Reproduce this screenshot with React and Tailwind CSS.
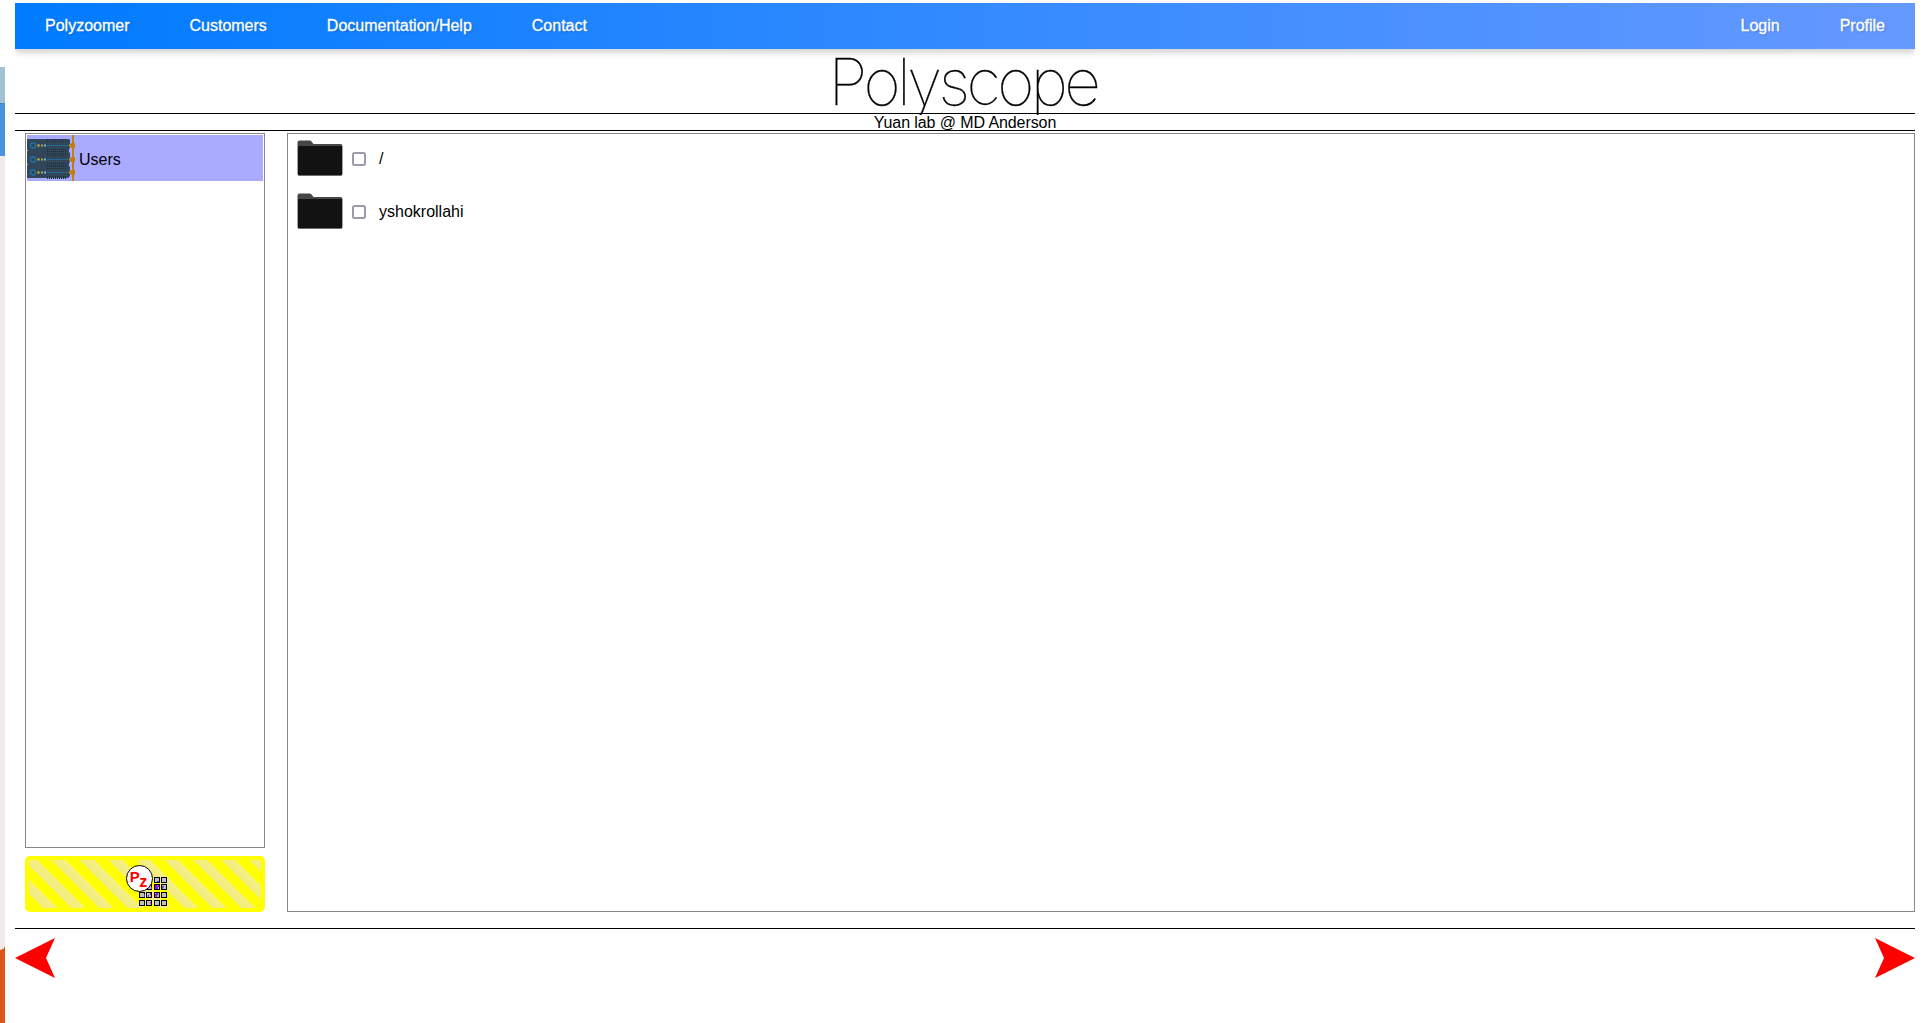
const vents = [-6, -4, 4, 6];

function ServerRack() {
  return (
    <svg className="h-[46px] w-[48px] shrink-0" viewBox="0 0 48 46">
      <path d="M0 4h42l1 1v8l-1 1v3l1 1v9l-1 1v3l1 1v9l-2 2H0v-13h1v-1H0v-13h1v-1H0z" fill="#32465a" />
      {[10, 24, 37].map((y) => (
        <g key={y}>
          {vents.map((v) => (
            <path key={v} d={`M20 ${y + v + 0.5}h19`} stroke="#202e3b" strokeWidth="1" strokeDasharray="1 1" />
          ))}
          <circle cx="6" cy={y + 0.5} r="2.6" fill="none" stroke="#2077ad" strokeWidth="1.2" />
          <rect x="10.5" y={y - 0.5} width="2" height="2" fill="#f1c40f" />
          <rect x="14" y={y - 0.5} width="2" height="2" fill="#8fae58" />
          <rect x="17" y={y - 0.5} width="2" height="2" fill="#7db5e6" />
          <path d={`M20 ${y + 0.5}h23`} stroke="#206a99" />
          <path d={`M42 ${y - 1}h2v-1h4v5h-4v-1h-2z`} fill="#c27f0e" />
        </g>
      ))}
      <path d="M46 0v46" stroke="#c27f0e" strokeWidth="2" />
    </svg>
  );
}

function Folder() {
  return (
    <svg className="h-[36px] w-[46px] shrink-0" viewBox="0 0 46 36">
      <path
        d="M.5 34V2.5Q.5 .5 2.5 .5H13Q14 .5 14.5 1.5L16.5 4H43.5Q45.5 4 45.5 6V34Q45.5 35.5 44 35.5H2Q.5 35.5 .5 34z"
        fill="#454746"
      />
      <path d="M1 7Q1 6 2 6H44Q45 6 45 7V34Q45 35 44 35H2Q1 35 1 34z" fill="#121212" />
      <path d="M1.5 35.5H44.5" stroke="#6d6d6d" />
    </svg>
  );
}

function FolderRow({ name }) {
  return (
    <li className="flex h-[53px] items-start pt-[6px] pl-[9px]">
      <Folder />
      <span className="mt-[12px] ml-[9px] size-[14px] shrink-0 rounded-[2.5px] border-2 border-[#9c9aac] bg-white" />
      <span className="mt-[9px] ml-[13px] leading-5">{name}</span>
    </li>
  );
}

const tileX = [13.5, 20.5, 28.5, 35.5];
const tileY = [12.5, 19.5, 27.5, 35.5];
const tiles = [
  [2, 0], [3, 0],
  [1, 1], [2, 1], [3, 1],
  [0, 2], [1, 2], [2, 2], [3, 2],
  [0, 3], [1, 3], [2, 3], [3, 3],
];

function PolyzoomerIcon() {
  return (
    <svg className="ml-[4px] h-[42px] w-[42px]" viewBox="0 0 42 42">
      <g>
        {tiles.map(([c, r]) => (
          <rect key={`${c}-${r}`} x={tileX[c]} y={tileY[r]} width="5" height="5" fill="#c0c0c0" stroke="#000" />
        ))}
        <path d="M29 20h4v2h-1v2h-3zM25 22h1v2h-1zM30 28h2v2h-1v2h-2v-3h1zM24 28h1v2h-1zM22 30h1v2h-1z" fill="#8a14f0" />
        <path d="M36 21h2v1h-1v2h-1zM18 29h1v3h-1zM31 16h2v1h-2zM30 22h1v1h-1z" fill="#4434f0" />
        <path d="M24 37h1v2h-1zM31 20h1v1h-1zM29 31h1v1h-1z" fill="#ff20e8" />
        <path d="M32 29h1v2h-1zM37 22h1v1h-1z" fill="#7cb87c" />
      </g>
      <circle cx="13.5" cy="13.5" r="13" fill="#fff" stroke="#000" />
      <text x="3.8" y="17" fill="#f00" fontFamily="'Liberation Sans', sans-serif" fontWeight="700" fontSize="15">
        P
      </text>
      <text x="13.2" y="21.5" fill="#f00" fontFamily="'Liberation Sans', sans-serif" fontWeight="700" fontSize="16">
        z
      </text>
    </svg>
  );
}

function NavLink({ children }) {
  return (
    <a className="flex items-center px-[30px] text-white [-webkit-text-stroke:0.3px_white] [text-shadow:1px_1px_2px_rgba(0,0,0,0.2)]">
      {children}
    </a>
  );
}

function Arrow({ className }) {
  return (
    <svg className={className} viewBox="0 0 40 40">
      <path d="M0 20L40 0L31 20L40 40z" fill="#f00" />
    </svg>
  );
}

export default function App() {
  return (
    <div className="flex h-[1023px] w-[1925px] overflow-hidden bg-white font-['Liberation_Sans',Arial,sans-serif] text-[16px] text-black">
      <div className="flex w-[5px] shrink-0 flex-col bg-[#dd561a]">
        <div className="h-[67px] bg-white" />
        <div className="h-[36px] bg-[#a1c2d5]" />
        <div className="h-[53px] border-t border-[#3f86cc] bg-[#4b94dd]" />
        <div className="h-[794px] rounded-br-[5px] bg-[#f0ebe8]" />
      </div>

      <div className="ml-[10px] flex w-[1900px] flex-col overflow-hidden pt-[3px]">
        <nav className="flex h-[46px] shrink-0 justify-between bg-linear-[90deg,#007bff,#6699ff] shadow-[0_4px_6px_rgba(0,0,0,0.17)]">
          <div className="flex">
            <NavLink>Polyzoomer</NavLink>
            <NavLink>Customers</NavLink>
            <NavLink>Documentation/Help</NavLink>
            <NavLink>Contact</NavLink>
          </div>
          <div className="flex">
            <NavLink>Login</NavLink>
            <NavLink>Profile</NavLink>
          </div>
        </nav>

        <h1 className="h-16 shrink-0 pt-px pr-[4px] text-center font-['Inter',sans-serif] text-[64px] leading-[64px] font-thin tracking-[-3.55px] [-webkit-text-stroke:0.3px_black]">
          Polyscope
        </h1>
        <div className="h-[18px] shrink-0 border-y border-black pt-px">
          <div className="relative h-[15px] bg-white text-center leading-[15px] tracking-[-0.09px]">
            Yuan lab @ MD Anderson
          </div>
        </div>

        <div className="mt-[2px] flex shrink-0 pl-[10px]">
          <aside className="flex w-[240px] flex-col gap-2">
            <div className="h-[715px] border border-[#888] p-px">
              <div className="flex h-[46px] items-center bg-[#aaaaff]">
                <ServerRack />
                <span className="mt-[3px] ml-[4px]">Users</span>
              </div>
            </div>
            <div className="h-14 rounded-[5px] bg-[yellow] p-1">
              <div className="flex h-12 justify-center bg-[repeating-linear-gradient(45deg,yellow_0px,yellow_10px,#f1eb84_10px,#f5f182_20px)] pt-[5px]">
                <PolyzoomerIcon />
              </div>
            </div>
          </aside>
          <ul className="ml-[22px] h-[779px] flex-1 border border-[#888]">
            <FolderRow name="/" />
            <FolderRow name="yshokrollahi" />
          </ul>
        </div>

        <footer className="mt-4 flex shrink-0 justify-between border-t border-black pt-[9px]">
          <Arrow className="size-10" />
          <Arrow className="size-10 rotate-180" />
        </footer>
      </div>
    </div>
  );
}
